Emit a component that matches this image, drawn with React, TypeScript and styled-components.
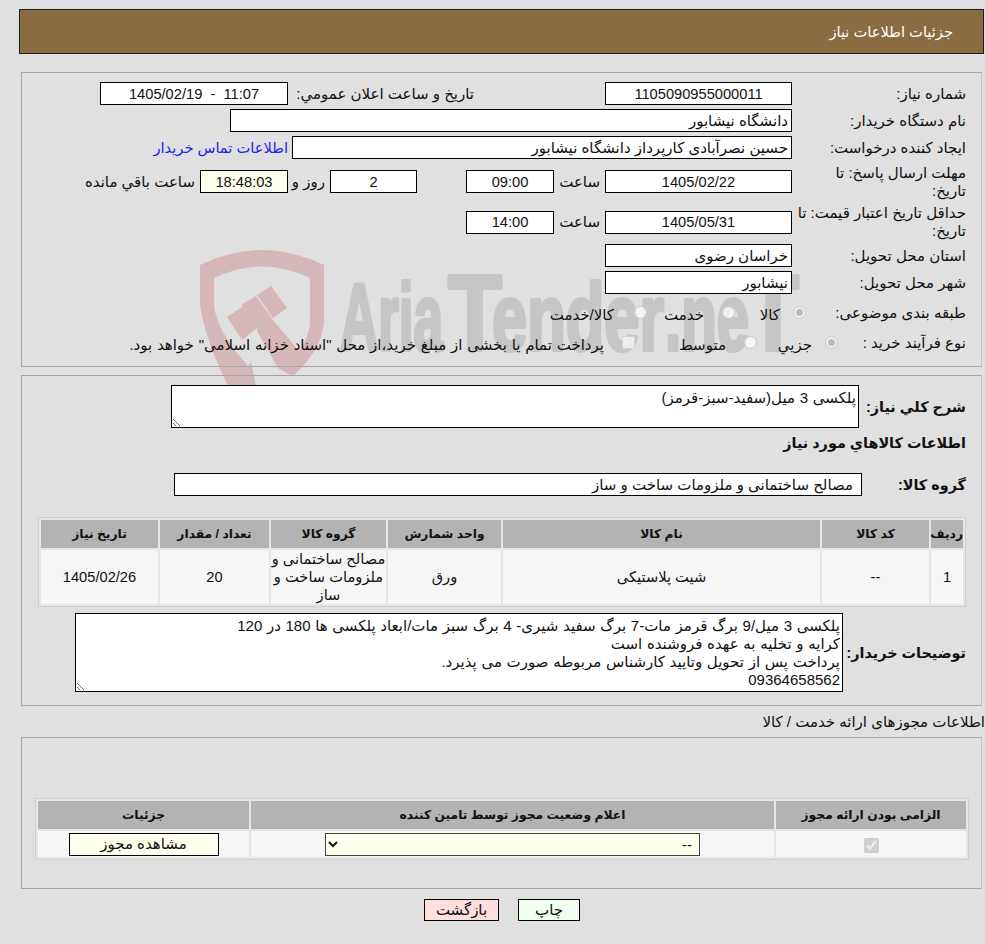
import styled, { createGlobalStyle } from "styled-components"

const GlobalStyle = createGlobalStyle`
  html, body {
    margin: 0;
    padding: 0;
    background: #e0e0e0;
  }
  body, input, textarea, select, button, table {
    font-family: "Liberation Sans", "DejaVu Sans", sans-serif;
    font-size: 15px;
    color: #111;
  }
`

const Page = styled.div`
  position: relative;
  width: 985px;
  height: 944px;
  overflow: hidden;
  padding-top: 9px;
  box-sizing: border-box;
  direction: rtl;
`

const Watermark = styled.svg`
  position: absolute;
  left: 190px;
  top: 240px;
  width: 640px;
  height: 160px;
`

const TitleBar = styled.div`
  position: relative;
  height: 43px;
  margin: 0 1px 18px 19px;
  padding-right: 30px;
  display: flex;
  align-items: center;
  background: #8b6b41;
  border: 1px solid #1c1c1c;
  color: #fff;
  font-size: 14.67px;
`

const Section = styled.section<{ $pad: string; $top?: number }>`
  position: relative;
  box-sizing: border-box;
  margin: ${(p) => p.$top ?? 0}px 3px 0 0;
  margin-left: 21px;
  padding: ${(p) => p.$pad};
  border: 1px solid #a6a6a6;
  border-right-color: #c4c4c4;
  display: flex;
  flex-direction: column;
`

const FormRows = styled.div`
  display: flex;
  flex-direction: column;
  gap: 4px;
`

const Row = styled.div<{ $h?: number; $top?: number }>`
  display: flex;
  align-items: center;
  height: ${(p) => (p.$h ? `${p.$h}px` : "auto")};
  margin-top: ${(p) => p.$top ?? 0}px;
`

const Label = styled.div<{ $w: number }>`
  width: ${(p) => p.$w}px;
  flex: none;
  line-height: 18px;
  white-space: nowrap;
`

const StrongLabel = styled(Label)`
  font-weight: bold;
  font-size: 14.4px;
`

const Caption = styled.div<{ $w?: number; $start?: number }>`
  width: ${(p) => (p.$w ? `${p.$w}px` : "auto")};
  margin-right: ${(p) => p.$start ?? 0}px;
  padding-right: 5px;
  box-sizing: border-box;
  flex: none;
  white-space: nowrap;
`

const Field = styled.input<{ $w: number; $center?: boolean; $warm?: boolean; $start?: number; $inset?: number }>`
  width: ${(p) => p.$w}px;
  height: 23px;
  box-sizing: border-box;
  flex: none;
  margin: 0 ${(p) => p.$start ?? 0}px 0 0;
  padding: 0 ${(p) => p.$inset ?? 3}px 0 3px;
  border: 1px solid #000;
  border-radius: 0;
  outline: none;
  background: ${(p) => (p.$warm ? "#ffffee" : "#fff")};
  font-size: ${(p) => (p.$center ? "14.67px" : "15px")};
  text-align: ${(p) => (p.$center ? "center" : "right")};
`

const ContactLink = styled.a`
  margin-right: 4px;
  color: #2222ee;
  font-size: 14.67px;
  text-decoration: none;
  white-space: nowrap;
`

const Option = styled.label<{ $w?: number }>`
  width: ${(p) => (p.$w ? `${p.$w}px` : "auto")};
  flex: none;
  display: flex;
  align-items: center;
  white-space: nowrap;
`

const OptionText = styled.span<{ $gap: number; $spread?: boolean }>`
  margin-right: ${(p) => p.$gap}px;
  padding-top: 3px;
  word-spacing: ${(p) => (p.$spread ? "0.6px" : "0")};
`

const Radio = styled.input`
  appearance: none;
  width: 13px;
  height: 13px;
  margin: 0 0 2px 0;
  border: 1px solid #c9c9c9;
  border-radius: 50%;
  box-sizing: border-box;
  background: rgba(255, 255, 255, 0.7);
  &:checked {
    background: radial-gradient(circle, #bdbdbd 0 3px, #f0f0f0 4px);
  }
`

const Tick = styled.input`
  appearance: none;
  width: 13px;
  height: 13px;
  margin: 0 0 2px 0;
  border: 1px solid #d2d2d2;
  border-radius: 2px;
  box-sizing: border-box;
  background: rgba(255, 255, 255, 0.7);
`

const NoteBox = styled.textarea<{ $w: number; $h: number }>`
  width: ${(p) => p.$w}px;
  height: ${(p) => p.$h}px;
  box-sizing: border-box;
  flex: none;
  margin: 0;
  padding: 3px 2px 1px;
  border: 1px solid #000;
  border-radius: 0;
  outline: none;
  line-height: 18px;
  word-spacing: 0.5px;
  background: #fff;
  overflow: hidden;
  display: block;
`

const Grid = styled.table<{ $w: number; $top?: number }>`
  width: ${(p) => p.$w}px;
  margin-top: ${(p) => p.$top ?? 0}px;
  table-layout: fixed;
  border-collapse: separate;
  border-spacing: 2px;
  border: 1px solid #cfcfcf;
  background: #e6e6e6;
`

const HeadCell = styled.th`
  height: 28px;
  padding: 0;
  background: #b3b3b3;
  font-size: 12.3px;
  font-weight: bold;
  text-align: center;
`

const BodyCell = styled.td<{ $h?: number }>`
  height: ${(p) => (p.$h ? `${p.$h}px` : "auto")};
  padding: 0;
  background: #f6f6f6;
  font-size: 14.67px;
  text-align: center;
  line-height: 18px;
  vertical-align: middle;
`

const OutsideTitle = styled.div`
  position: relative;
  height: 31px;
  display: flex;
  align-items: center;
  white-space: nowrap;
`

const WarmButton = styled.button`
  width: 150px;
  height: 23px;
  padding: 0;
  background: #ffffee;
  border: 1px solid #000;
  border-radius: 0;
  display: block;
  margin: 0 auto;
`

const StatusSelect = styled.select`
  width: 375px;
  height: 23px;
  padding: 0 3px;
  background: #ffffee;
  border: 1px solid #444;
  border-radius: 0;
  display: block;
  margin: 0 auto;
`

const RequiredTick = styled.input`
  width: 15px;
  height: 15px;
  margin: 0;
  vertical-align: middle;
`

const Actions = styled.div`
  position: relative;
  display: flex;
  justify-content: center;
  gap: 19px;
  margin-top: 10px;
  padding-left: 19px;
  direction: ltr;
`

const ActionButton = styled.button<{ $bg: string; $w: number }>`
  width: ${(p) => p.$w}px;
  height: 22px;
  padding: 0;
  background: ${(p) => p.$bg};
  border: 1px solid #000;
  border-radius: 0;
`

const itemColumns = [32, 107, 317, 113, 115, 109, 117]
const itemHeads = ["ردیف", "کد کالا", "نام کالا", "واحد شمارش", "گروه کالا", "تعداد / مقدار", "تاریخ نیاز"]
const permitColumns = [190, 523, 211]

export default function App() {
  return (
    <Page>
      <GlobalStyle />
      <Watermark viewBox="190 240 640 160" aria-hidden="true">
        <g fill="#d6b7b9">
          <path d="M200 265 Q262 235 324 265 L324 322 Q322 350 293 376 L278 368 L300 350 Q310 335 310 320 L310 278 Q262 255 214 278 L214 305 Q216 330 248 366 L251 362 L257 390 L230 390 Q205 340 200 305 Z" />
          <polygon points="227,317 242,307 257,328 242,340" />
          <polygon points="241,305 256,296 273,320 258,330" />
          <polygon points="257,295 271,286 287,308 273,318" />
          <polygon points="257,331 272,319 300,352 293,376 278,368" />
        </g>
        <g fill="#c6c6c6" stroke="#c6c6c6" strokeWidth="4" strokeLinejoin="round" fontFamily="Liberation Sans" fontWeight="bold" direction="ltr">
          <text x="340" y="350" fontSize="94" textLength="103" lengthAdjust="spacingAndGlyphs">Aria</text>
          <text x="448" y="350" fontSize="108" textLength="54" lengthAdjust="spacingAndGlyphs">T</text>
          <text x="492" y="350" fontSize="94" textLength="172" lengthAdjust="spacingAndGlyphs">ender</text>
          <text x="665" y="350" fontSize="94" textLength="84" lengthAdjust="spacingAndGlyphs">.ne</text>
          <text x="747" y="350" fontSize="108" textLength="52" lengthAdjust="spacingAndGlyphs">T</text>
        </g>
      </Watermark>

      <TitleBar>جزئیات اطلاعات نیاز</TitleBar>

      <Section $pad="9px 15px 12px 0">
        <FormRows>
          <Row $h={23}>
            <Label $w={174}>شماره نیاز:</Label>
            <Field $w={187} $center readOnly value="1105090955000011" />
            <Caption $w={191} $start={126}>تاریخ و ساعت اعلان عمومي:</Caption>
            <Field $w={188} $center readOnly value="11:07  -  1405/02/19" />
          </Row>
          <Row $h={23}>
            <Label $w={174}>نام دستگاه خریدار:</Label>
            <Field $w={562} readOnly value="دانشگاه نیشابور" />
          </Row>
          <Row $h={23}>
            <Label $w={174}>ایجاد کننده درخواست:</Label>
            <Field $w={500} readOnly value="حسین نصرآبادی کارپرداز دانشگاه نیشابور" />
            <ContactLink href="#">اطلاعات تماس خریدار</ContactLink>
          </Row>
          <Row $h={37}>
            <Label $w={174}>مهلت ارسال پاسخ: تا<br />تاریخ:</Label>
            <Field $w={187} $center readOnly value="1405/02/22" />
            <Caption $w={51}>ساعت</Caption>
            <Field $w={88} $center readOnly value="09:00" />
            <Field $w={87} $center $start={49} readOnly value="2" />
            <Caption $w={42}>روز و</Caption>
            <Field $w={88} $center $warm readOnly value="18:48:03" />
            <Caption>ساعت باقي مانده</Caption>
          </Row>
          <Row $h={36}>
            <Label $w={174}>حداقل تاریخ اعتبار قیمت: تا<br />تاریخ:</Label>
            <Field $w={187} $center readOnly value="1405/05/31" />
            <Caption $w={51}>ساعت</Caption>
            <Field $w={88} $center readOnly value="14:00" />
          </Row>
          <Row $h={23}>
            <Label $w={174}>استان محل تحویل:</Label>
            <Field $w={187} readOnly value="خراسان رضوی" />
          </Row>
          <Row $h={23}>
            <Label $w={174}>شهر محل تحویل:</Label>
            <Field $w={187} readOnly value="نیشابور" />
          </Row>
          <Row $h={30}>
            <Label $w={160}>طبقه بندی موضوعی:</Label>
            <Option $w={71}>
              <Radio type="radio" name="category" disabled defaultChecked />
              <OptionText $gap={13}>کالا</OptionText>
            </Option>
            <Option $w={88}>
              <Radio type="radio" name="category" disabled />
              <OptionText $gap={18}>خدمت</OptionText>
            </Option>
            <Option>
              <Radio type="radio" name="category" disabled />
              <OptionText $gap={20}>کالا/خدمت</OptionText>
            </Option>
          </Row>
          <Row $h={22}>
            <Label $w={128}>نوع فرآیند خرید :</Label>
            <Option $w={81}>
              <Radio type="radio" name="process" disabled defaultChecked />
              <OptionText $gap={13}>جزیي</OptionText>
            </Option>
            <Option $w={122}>
              <Radio type="radio" name="process" disabled />
              <OptionText $gap={18}>متوسط</OptionText>
            </Option>
            <Option>
              <Tick type="checkbox" disabled />
              <OptionText $gap={18} $spread>پرداخت تمام یا بخشی از مبلغ خرید،از محل "اسناد خزانه اسلامی" خواهد بود.</OptionText>
            </Option>
          </Row>
        </FormRows>
      </Section>

      <Section $pad="9px 15px 13px 0" $top={8}>
        <Row $h={43}>
          <StrongLabel $w={107}>شرح كلي نياز:</StrongLabel>
          <NoteBox $w={688} $h={43} readOnly dir="rtl" value="پلکسی 3 میل(سفید-سبز-قرمز)" />
        </Row>
        <Row $h={18} $top={6}>
          <StrongLabel $w={300}>اطلاعات کالاهاي مورد نياز</StrongLabel>
        </Row>
        <Row $h={23} $top={21}>
          <StrongLabel $w={104}>گروه کالا:</StrongLabel>
          <Field $w={688} $inset={8} readOnly value="مصالح ساختمانی و ملزومات ساخت و ساز" />
        </Row>
        <Grid $w={928} $top={21}>
          <colgroup>
            {itemColumns.map((w, i) => (
              <col key={i} style={{ width: w }} />
            ))}
          </colgroup>
          <thead>
            <tr>
              {itemHeads.map((h) => (
                <HeadCell key={h}>{h}</HeadCell>
              ))}
            </tr>
          </thead>
          <tbody>
            <tr>
              <BodyCell>1</BodyCell>
              <BodyCell>--</BodyCell>
              <BodyCell>شیت پلاستیکی</BodyCell>
              <BodyCell>ورق</BodyCell>
              <BodyCell>مصالح ساختمانی و ملزومات ساخت و ساز</BodyCell>
              <BodyCell>20</BodyCell>
              <BodyCell>1405/02/26</BodyCell>
            </tr>
          </tbody>
        </Grid>
        <Row $h={79} $top={6}>
          <StrongLabel $w={123}>توضیحات خریدار:</StrongLabel>
          <NoteBox
            $w={768}
            $h={79}
            readOnly
            dir="rtl"
            value={"پلکسی 3 میل/9 برگ قرمز مات-7 برگ سفید شیری- 4 برگ سبز مات/ابعاد پلکسی ها 180 در 120\nکرایه و تخلیه به عهده فروشنده است\nپرداخت پس از تحویل وتایید کارشناس مربوطه صورت می پذیرد.\n09364658562"}
          />
        </Row>
      </Section>

      <OutsideTitle>اطلاعات مجوزهای ارائه خدمت / کالا</OutsideTitle>

      <Section $pad="60px 12px 28px 0">
        <Grid $w={934}>
          <colgroup>
            {permitColumns.map((w, i) => (
              <col key={i} style={{ width: w }} />
            ))}
          </colgroup>
          <thead>
            <tr>
              <HeadCell>الزامی بودن ارائه مجوز</HeadCell>
              <HeadCell>اعلام وضعیت مجوز توسط تامین کننده</HeadCell>
              <HeadCell>جزئیات</HeadCell>
            </tr>
          </thead>
          <tbody>
            <tr>
              <BodyCell $h={26}>
                <RequiredTick type="checkbox" disabled defaultChecked />
              </BodyCell>
              <BodyCell>
                <StatusSelect defaultValue="none" dir="rtl">
                  <option value="none">--</option>
                </StatusSelect>
              </BodyCell>
              <BodyCell>
                <WarmButton type="button">مشاهده مجوز</WarmButton>
              </BodyCell>
            </tr>
          </tbody>
        </Grid>
      </Section>

      <Actions>
        <ActionButton type="button" $bg="#ffdede" $w={75}>بازگشت</ActionButton>
        <ActionButton type="button" $bg="#f0fff0" $w={62}>چاپ</ActionButton>
      </Actions>
    </Page>
  )
}
